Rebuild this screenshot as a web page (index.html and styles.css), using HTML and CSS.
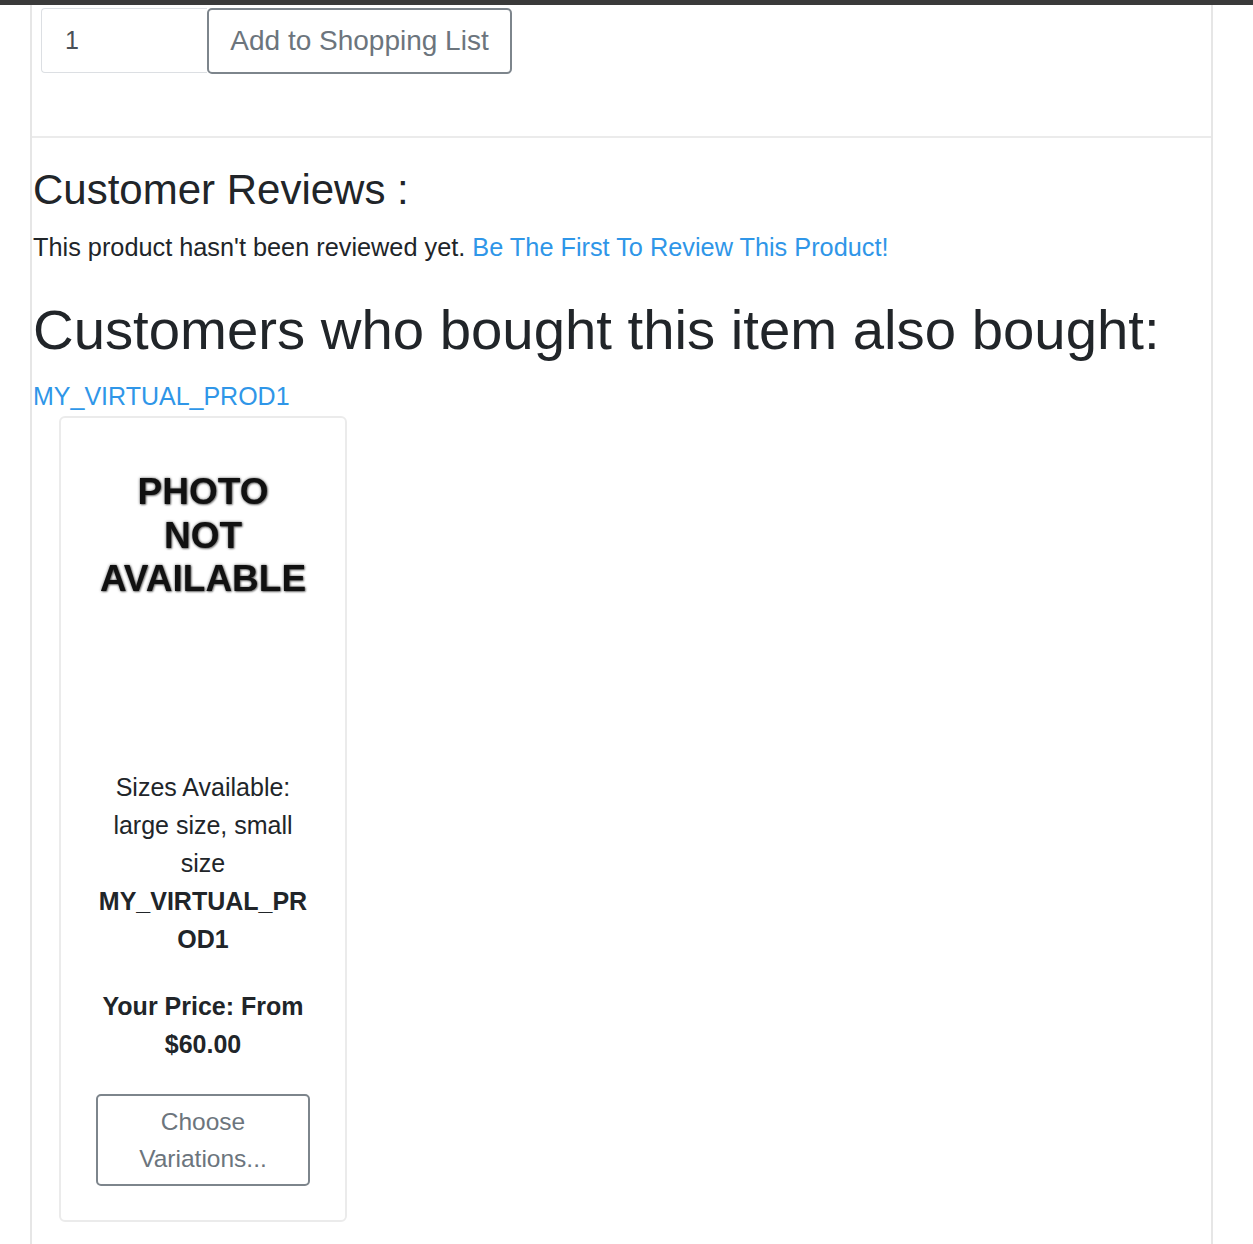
FILE: index.html
```html
<!DOCTYPE html>
<html>
<head>
<meta charset="utf-8">
<link rel="stylesheet" href="styles.css">
</head>
<body>
<div class="topbar"></div>
<div class="panel">
  <div class="cart-row">
    <div class="qty">1</div>
    <button class="btn-outline add-btn">Add to Shopping List</button>
  </div>
  <div class="reviews">
    <h3 class="rev-title">Customer Reviews :</h3>
    <p class="rev-text">This product hasn't been reviewed yet. <a class="link" href="#">Be The First To Review This Product!</a></p>
    <h2 class="also-title">Customers who bought this item also bought:</h2>
    <a class="link prod-link" href="#">MY_VIRTUAL_PROD1</a>
    <div class="card">
      <div class="photo">
        <span>PHOTO</span>
        <span>NOT</span>
        <span>AVAILABLE</span>
      </div>
      <div class="sizes">Sizes Available: large size, small size</div>
      <div class="pname">MY_VIRTUAL_PROD1</div>
      <div class="price">Your Price: From $60.00</div>
      <button class="btn-outline choose-btn">Choose Variations...</button>
    </div>
  </div>
</div>
</body>
</html>
```
FILE: styles.css
```css
* { box-sizing: border-box; }
html, body { margin: 0; padding: 0; background: #fff; }
body {
  font-family: "Liberation Sans", Arial, sans-serif;
  font-size: 25px;
  line-height: 38px;
  color: #212529;
  width: 1253px;
  height: 1244px;
  overflow: hidden;
}
.topbar { height: 5px; background: #3a3a3a; }
.panel {
  margin-left: 30px;
  width: 1183px;
  border-left: 2px solid #e6e6e6;
  border-right: 2px solid #e6e6e6;
  min-height: 1239px;
}
.cart-row {
  display: flex;
  padding: 3px 0 0 9px;
  height: 133px;
  border-bottom: 2px solid #ebebeb;
}
.qty {
  width: 166px;
  height: 65px;
  border: 1px solid #dcdfe3;
  border-right: none;
  border-radius: 4px 0 0 4px;
  padding-left: 23px;
  line-height: 62px;
  font-size: 25px;
  color: #495057;
}
.btn-outline {
  font-family: "Liberation Sans", Arial, sans-serif;
  background: #fff;
  color: #6c757d;
  border: 2px solid #7d858c;
  border-radius: 5px;
  cursor: pointer;
}
.add-btn {
  width: 305px;
  height: 66px;
  font-size: 28px;
  padding: 0;
}
.reviews { padding: 0 0 0 1px; }
.rev-title {
  margin: 28px 0 0 0;
  font-weight: normal;
  font-size: 42px;
  line-height: 48px;
}
.rev-text { margin: 14px 0 0 0; font-size: 25.3px; line-height: 38px; }
.link { color: #2f96e8; text-decoration: none; }
.also-title {
  margin: 32px 0 0 0;
  font-weight: normal;
  font-size: 56.3px;
  line-height: 64px;
}
.prod-link { display: block; margin-top: 15px; line-height: 38px; }
.card {
  margin: 1px 0 0 26px;
  width: 288px;
  height: 806px;
  border: 2px solid #ebebeb;
  border-radius: 6px;
  padding: 0 35px;
  text-align: center;
  display: flex;
  flex-direction: column;
  align-items: center;
}
.photo {
  height: 350px;
  padding-top: 52px;
  display: flex;
  flex-direction: column;
  align-items: center;
  font-weight: bold;
  font-size: 37px;
  line-height: 43.5px;
  color: #111;
  text-shadow: 0 0 3px rgba(0,0,0,0.6), 1px 1px 2px rgba(0,0,0,0.4);
  filter: blur(0.6px);
}
.sizes { width: 100%; }
.pname {
  width: 100%;
  font-weight: bold;
  word-break: break-all;
}
.price { width: 100%; font-weight: bold; margin-top: 29px; }
.choose-btn {
  margin-top: 31px;
  width: 214px;
  height: 92px;
  font-size: 24.5px;
  line-height: 37px;
  padding: 0 20px;
}
```
